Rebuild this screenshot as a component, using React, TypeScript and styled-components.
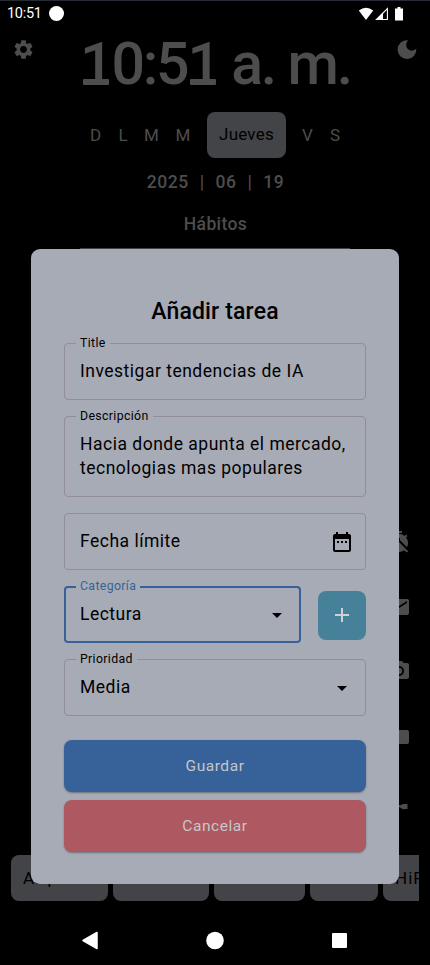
import React from "react";
import styled, { createGlobalStyle, css } from "styled-components";
import {
  MdSettings,
  MdTimerOff,
  MdEmail,
  MdPhotoCamera,
  MdFolder,
  MdDateRange,
  MdArrowDropDown,
  MdAdd,
} from "react-icons/md";

const dim = "#4d4d4d";
const chip = "#434447";
const surface = "#a7abb6";
const outline = "#918e99";
const blue = "#366299";

const GlobalStyle = createGlobalStyle`
  * { box-sizing: border-box; }
  body { margin: 0; background: #000; }
`;

const Screen = styled.div`
  position: relative;
  width: 430px;
  height: 965px;
  overflow: hidden;
  display: flex;
  flex-direction: column;
  background: #000;
  border-top: 1px solid #262b34;
  font-family: Roboto, "Liberation Sans", sans-serif;
  color: ${dim};
`;

const StatusBar = styled.header`
  display: flex;
  align-items: center;
  height: 25px;
  padding: 0 26px 0 7px;
  color: #fff;
  font-size: 14.5px;
  letter-spacing: -0.3px;
`;

const Notification = styled.span`
  width: 15px;
  height: 15px;
  margin-left: 7px;
  border-radius: 50%;
  background: #fff;
`;

const StatusIcons = styled.svg`
  margin-left: auto;
`;

const TopRow = styled.div`
  display: flex;
  justify-content: space-between;
  align-items: flex-start;
  height: 86px;
  padding: 12px 12px 0;
`;

const Clock = styled.div`
  width: 270px;
  margin-top: -8px;
  display: flex;
  justify-content: center;
  white-space: pre;
  font-size: 59px;
  line-height: 68px;
  font-weight: 500;
  letter-spacing: -2.2px;
`;

const SlabOne = styled.span`
  position: relative;

  &::after {
    content: "";
    position: absolute;
    left: 3px;
    bottom: 13px;
    width: 26px;
    height: 6px;
    border-radius: 1px;
    background: ${dim};
  }
`;

const Days = styled.div`
  display: flex;
  align-items: center;
  height: 46px;
  padding-left: 90px;
  font-size: 17px;
`;

const Day = styled.span<{ $w: number }>`
  width: ${(p) => p.$w}px;
`;

const Today = styled.span`
  width: 79px;
  height: 46px;
  margin-right: 16px;
  border-radius: 8px;
  background: ${chip};
  color: #000;
  line-height: 45px;
  text-align: center;
  letter-spacing: 0.2px;
`;

const DateLine = styled.div`
  display: flex;
  justify-content: center;
  gap: 11px;
  height: 48px;
  padding-left: 1px;
  line-height: 48px;
  font-size: 17.5px;
  font-weight: 500;
  letter-spacing: 0.5px;
`;

const SectionTitle = styled.div`
  height: 42px;
  padding: 6px 0 0 1px;
  text-align: center;
  font-size: 17.5px;
  line-height: 24px;
  font-weight: 500;
  letter-spacing: 0.4px;
`;

const Divider = styled.div`
  width: 270px;
  height: 1px;
  margin: 0 auto;
  background: #424346;
`;

const Shortcuts = styled.aside`
  display: flex;
  flex-direction: column;
  align-items: flex-end;
  gap: 40.5px;
  height: 325px;
  margin-top: 281px;
  padding-right: 19px;
  flex: none;

  svg { flex: none; }
`;

const AppBar = styled.div`
  display: flex;
  gap: 5px;
  margin: 0 11px;
  height: 46px;
  overflow: hidden;
  font-size: 17px;
  letter-spacing: 1px;
  line-height: 46px;
  color: #000;
`;

const AppChip = styled.div<{ $w: number }>`
  flex: none;
  width: ${(p) => p.$w}px;
  padding-left: 12px;
  border-radius: 8px;
  background: ${chip};
`;

const NavBar = styled.svg`
  display: block;
  width: 430px;
  height: 64px;
  flex: none;
`;

const Dialog = styled.section`
  position: absolute;
  left: 31px;
  top: 248px;
  width: 367.6px;
  height: 635px;
  padding: 46px 32.6px 0 33px;
  border-radius: 9px;
  background: ${surface};
  color: #000;
  display: flex;
  flex-direction: column;
`;

const DialogTitle = styled.h1`
  margin: 0 0 15px;
  height: 33px;
  line-height: 33px;
  text-align: center;
  font-size: 23px;
  font-weight: 500;
  letter-spacing: 0.15px;
`;

const Field = styled.div<{ $h?: number; $active?: boolean }>`
  position: relative;
  display: flex;
  align-items: center;
  justify-content: space-between;
  flex: 1 0 auto;
  height: ${(p) => p.$h ?? 57}px;
  padding: 0 ${(p) => (p.$active ? 10 : 11)}px 0 ${(p) => (p.$active ? 14 : 15)}px;
  border-radius: 4px;
  border: ${(p) => (p.$active ? `2px solid ${blue}` : `1px solid ${outline}`)};
  ${(p) =>
    p.$active &&
    css`
      label { color: ${blue}; top: -9px; left: 10px; }
    `}
`;

const Label = styled.label`
  position: absolute;
  top: -8px;
  left: 11px;
  padding: 0 4px;
  background: ${surface};
  font-size: 12.3px;
  line-height: 14px;
  letter-spacing: 0.35px;
`;

const Value = styled.span`
  margin-top: -1px;
  font-size: 17.5px;
  line-height: 24px;
  letter-spacing: 0.5px;
  white-space: nowrap;
`;

const Form = styled.form`
  display: flex;
  flex-direction: column;
  gap: 16px;
`;

const Line = styled.div`
  display: flex;
  align-items: center;
  gap: 17px;
`;

const AddButton = styled.button`
  display: grid;
  place-items: center;
  width: 48px;
  height: 49px;
  margin-top: 1px;
  padding: 0;
  border: 0;
  border-radius: 8px;
  background: #458299;
  color: #d0d0d0;
`;

const Actions = styled.div`
  display: flex;
  flex-direction: column;
  gap: 8px;
  margin-top: 24px;
`;

const Action = styled.button<{ $bg: string }>`
  height: 52px;
  border: 0;
  border-radius: 8px;
  background: ${(p) => p.$bg};
  color: #c6c6c8;
  font: 400 15.5px Roboto, sans-serif;
  letter-spacing: 0.55px;
  box-shadow: 0 1px 2px rgba(0, 0, 0, 0.35);
`;

export default function App() {
  return (
    <>
      <GlobalStyle />
      <Screen>
        <StatusBar>
          10:51
          <Notification />
          <StatusIcons width="46" height="16" viewBox="0 0 46 16">
            <path d="M.8 4.500Q8-1.200 15.200 4.500L8 14Z" fill="#fff" />
            <path d="M29.400 2.500V13.500H18.500Z" fill="none" stroke="#fff" strokeWidth="1.100" />
            <path d="M17.500 14 25 6.500V14Z" fill="#fff" />
            <path d="M37 2.500h2.500V1h3v1.500H45V14.500H37Z" fill="#fff" />
          </StatusIcons>
        </StatusBar>
        <TopRow>
          <MdSettings size={23} />
          <Clock>
            <SlabOne>1</SlabOne>0:5<SlabOne>1</SlabOne> a. m.
          </Clock>
          <svg width="22" height="24" viewBox="396 38 22 24">
            <path d="M408 40.300A9.400 9.400 0 1 0 416.300 48.500C411 54 402.500 48 408 40.300Z" fill={dim} />
          </svg>
        </TopRow>
        <Days>
          <Day $w={28.5}>D</Day>
          <Day $w={25.5}>L</Day>
          <Day $w={31.5}>M</Day>
          <Day $w={31.5}>M</Day>
          <Today>Jueves</Today>
          <Day $w={28}>V</Day>
          <Day $w={12}>S</Day>
        </Days>
        <DateLine>
          <span>2025</span>
          <span>|</span>
          <span>06</span>
          <span>|</span>
          <span>19</span>
        </DateLine>
        <SectionTitle>Hábitos</SectionTitle>
        <Divider />
        <Shortcuts>
          <MdTimerOff size={24} />
          <MdEmail size={24} />
          <MdPhotoCamera size={24} />
          <MdFolder size={24} />
          <svg width="24" height="24" viewBox="0 0 24 24">
            <path d="M11 17.500 14 17Q16 15.500 18 16H20.500V21H18Q16 22 14 20L11 18.500Z" fill={dim} />
          </svg>
        </Shortcuts>
        <AppBar>
          <AppChip $w={97}>Arq.</AppChip>
          <AppChip $w={96} />
          <AppChip $w={91} />
          <AppChip $w={68} />
          <AppChip $w={90}>HiFi</AppChip>
        </AppBar>
        <NavBar viewBox="0 901 430 64" fill="#fff">
          <path d="M83 940.500 97 932.500V948.500Z" stroke="#fff" strokeWidth="1.500" strokeLinejoin="round" />
          <circle cx="215" cy="940.500" r="8.800" />
          <rect x="332" y="933" width="15" height="15" rx="1" />
        </NavBar>

        <Dialog>
          <DialogTitle>Añadir tarea</DialogTitle>
          <Form>
            <Field>
              <Label>Title</Label>
              <Value>Investigar tendencias de IA</Value>
            </Field>
            <Field $h={81}>
              <Label>Descripción</Label>
              <Value>
                Hacia donde apunta el mercado,
                <br />
                tecnologias mas populares
              </Value>
            </Field>
            <Field>
              <Value>Fecha límite</Value>
              <MdDateRange size={24} />
            </Field>
            <Line>
              <Field $active>
                <Label>Categoría</Label>
                <Value>Lectura</Value>
                <MdArrowDropDown size={24} />
              </Field>
              <AddButton type="button" aria-label="Añadir categoría">
                <MdAdd size={24} />
              </AddButton>
            </Line>
            <Field>
              <Label>Prioridad</Label>
              <Value>Media</Value>
              <MdArrowDropDown size={24} />
            </Field>
          </Form>
          <Actions>
            <Action $bg={blue}>Guardar</Action>
            <Action $bg="#ae5861">Cancelar</Action>
          </Actions>
        </Dialog>
      </Screen>
    </>
  );
}
